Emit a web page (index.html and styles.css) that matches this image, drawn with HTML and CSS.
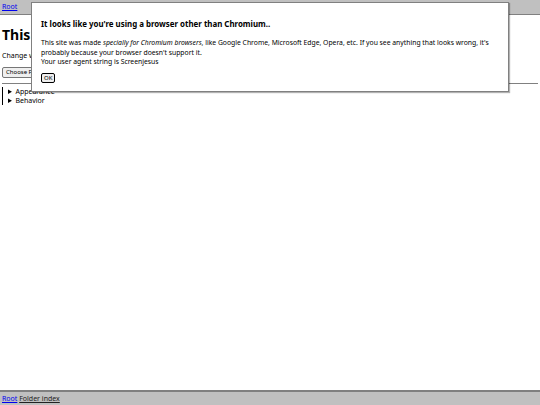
FILE: index.html
```html
<!DOCTYPE html>
<html lang="en">
<head>
    <meta charset="UTF-8">
    <title>Settings</title>
    <link rel="stylesheet" href="styles.css">
</head>
<body>
    <header class="topbar">
        <a href="#">Root</a>
    </header>

    <main class="page">
        <h1>This is where settings live</h1>
        <p>Change what the site looks like and how it behaves. Settings are stored in your browser.</p>
        <div class="import">
            <button class="file-btn">Choose File</button>
        </div>
        <hr>
        <div class="groups">
            <details><summary>Appearance</summary></details>
            <details><summary>Behavior</summary></details>
        </div>
    </main>

    <footer class="bottombar">
        <a href="#">Root</a>
        <a href="#" class="plain">Folder index</a>
    </footer>

    <div class="dialog">
        <h2>It looks like you're using a browser other than Chromium..</h2>
        <p>This site was made <em>specially for Chromium browsers</em>, like Google Chrome, Microsoft Edge, Opera, etc. If you see anything that looks wrong, it's probably because your browser doesn't support it.<br>Your user agent string is Screenjesus</p>
        <button class="ok">OK</button>
    </div>
</body>
</html>
```

FILE: styles.css
```css
* {
    box-sizing: border-box;
}

body {
    margin: 0;
    height: 405px;
    font-family: 'Noto Sans', sans-serif;
    font-size: 7px;
    color: #000;
    display: flex;
    flex-direction: column;
    position: relative;
    overflow: hidden;
}

a {
    color: #00e;
}

/* Top and bottom bars */
.topbar {
    background: #c0c0c0;
    border-bottom: 1px solid #808080;
    height: 15px;
    padding: 2px 2px;
    line-height: 10px;
}

.bottombar {
    margin-top: auto;
    background: #c0c0c0;
    border-top: 2px solid #808080;
    height: 15px;
    padding: 2px 2px;
    line-height: 10px;
}

.bottombar .plain {
    color: #222;
}

/* Main page */
.page {
    padding: 0 2px;
}

.page h1 {
    font-size: 14px;
    margin: 10px 0 7px;
    white-space: nowrap;
}

.page p {
    margin: 0 0 7px;
}

.file-btn {
    font-family: inherit;
    font-size: 6px;
    padding: 1px 3px;
    background: #efefef;
    border: 1px solid #767676;
    border-radius: 2px;
    color: #000;
    width: 60px;
    text-align: left;
    height: 11px;
    line-height: 7px;
}

.page hr {
    border: none;
    border-top: 1px solid #808080;
    margin: 5px 0 3px;
}

.groups {
    border-left: 1px solid #000;
    padding-left: 5px;
}

.groups summary {
    line-height: 9px;
    cursor: pointer;
}

/* Browser warning dialog */
.dialog {
    position: absolute;
    left: 31px;
    top: 2px;
    width: 478px;
    height: 90px;
    background: #fff;
    border: 1px solid #808080;
    box-shadow: 1px 1px 1px rgba(0, 0, 0, 0.3);
    padding: 0 9px;
}

.dialog h2 {
    font-size: 7.9px;
    margin: 16px 0 9px;
}

.dialog p {
    font-size: 6.8px;
    margin: 0 0 6px;
    line-height: 9.5px;
}

.ok {
    font-family: inherit;
    font-size: 6px;
    padding: 0 2px;
    height: 10px;
    line-height: 8px;
    background: #efefef;
    border: 1px solid #000;
    border-radius: 2px;
}
```
